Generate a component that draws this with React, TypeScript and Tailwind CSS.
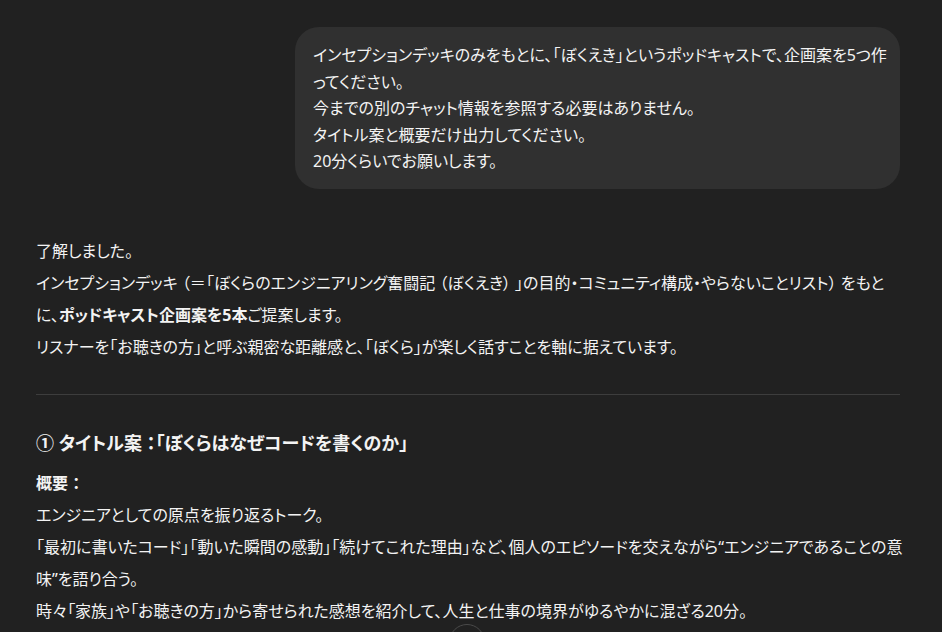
export default function App() {
  return (
    <div className="relative h-[632px] overflow-hidden bg-[#212121] font-['Noto_Sans','Noto_Sans_CJK_JP',sans-serif] text-[16px] text-[#f3f3f3] [font-feature-settings:'palt']">
      <div className="pl-9 pr-[42px] pt-[27px]">
        {/* user message */}
        <div className="flex justify-end">
          <div className="w-[605px] whitespace-nowrap rounded-[24px] bg-[#303030] pt-[15px] pb-[14px] pl-[18px] pr-[16px] leading-[26.5px]">
            インセプションデッキのみをもとに、「ぼくえき」というポッドキャストで、企画案を5つ作
            <br />
            ってください。
            <br />
            今までの別のチャット情報を参照する必要はありません。
            <br />
            タイトル案と概要だけ出力してください。
            <br />
            20分くらいでお願いします。
          </div>
        </div>

        {/* assistant message */}
        <div className="mt-[46px] whitespace-nowrap leading-[32px]">
          <p>了解しました。</p>
          <p>
            インセプションデッキ （＝「ぼくらのエンジニアリング奮闘記 （ぼくえき） 」の目的・コミュニティ構成・やらないことリスト） をもと
            <br />
            に、
            <strong className="font-bold">ポッドキャスト企画案を5本</strong>
            ご提案します。
          </p>
          <p>リスナーを「お聴きの方」と呼ぶ親密な距離感と、「ぼくら」が楽しく話すことを軸に据えています。</p>

          <hr className="mt-[31px] border-t border-[#3d3d3d]" />

          <h3 className="mt-[34px] text-[18px] font-bold leading-[28px]">① タイトル案 ：「ぼくらはなぜコードを書くのか」</h3>
          <p className="mt-[10px] font-bold">概要 ：</p>
          <p>
            エンジニアとしての原点を振り返るトーク。
            <br />
            「最初に書いたコード」「動いた瞬間の感動」「続けてこれた理由」など、個人のエピソードを交えながら“エンジニアであることの意
            <br />
            味”を語り合う。
            <br />
            時々「家族」や「お聴きの方」から寄せられた感想を紹介して、人生と仕事の境界がゆるやかに混ざる20分。
          </p>
        </div>
      </div>

      {/* scroll to bottom button */}
      <div className="absolute left-[449px] top-[624px] h-9 w-9 rounded-full border border-[#4a4a4a] bg-[#212121]" />
    </div>
  )
}
